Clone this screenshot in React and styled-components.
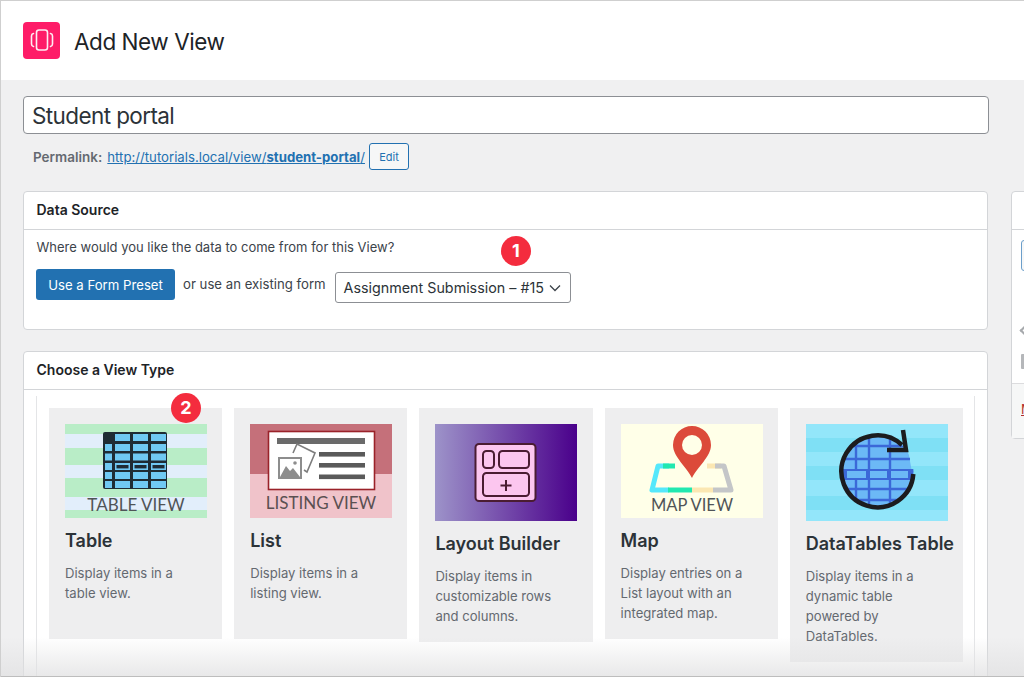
import React from "react";
import styled, { createGlobalStyle } from "styled-components";

const Global = createGlobalStyle`
  html, body { margin: 0; padding: 0; background: #f0f0f1; }
  * { box-sizing: border-box; }
  body { font-family: Inter, "Liberation Sans", sans-serif; color: #1d2327; }
`;

const Page = styled.div`
  position: relative;
  width: 1024px;
  height: 677px;
  overflow: hidden;
  background: #f0f0f1;
  border-top: 1px solid #cfcfcf;
  border-left: 1px solid #cfcfcf;
`;
const Header = styled.header`
  height: 79px;
  background: #fff;
  display: flex;
  align-items: center;
  gap: 14px;
  padding: 2px 0 0 22px;
`;
const Logo = styled.div`
  width: 37px;
  height: 37px;
  margin-top: -3px;
  border-radius: 4px;
  background: #fe1c68;
  display: flex;
  align-items: center;
  justify-content: center;
`;
const PageTitle = styled.h1`
  margin: 0;
  font-size: 22.5px;
  font-weight: 400;
  letter-spacing: -0.45px;
  color: #1d2327;
`;
const Content = styled.main`
  padding: 16px 0 0 22px;
  width: 1200px;
`;
const TitleInput = styled.div`
  width: 966px;
  height: 38px;
  background: #fff;
  border: 1px solid #8c8f94;
  border-radius: 4px;
  padding: 0 8px;
  font-size: 22.5px;
  letter-spacing: -0.6px;
  line-height: 37px;
  color: #2c3338;
`;
const PermaRow = styled.div`
  display: flex;
  align-items: center;
  height: 27px;
  margin: 9px 0 21px 10px;
  font-size: 13.5px;
  color: #646970;
`;
const PermaLabel = styled.strong`
  font-weight: 600;
  margin-right: 5px;
`;
const PermaLink = styled.a`
  color: #2271b1;
  text-decoration: underline;
  font-size: 13.2px;
`;
const EditButton = styled.button`
  margin-left: 4px;
  width: 40px;
  height: 27px;
  background: #f6f7f7;
  border: 1px solid #2271b1;
  border-radius: 3px;
  color: #2271b1;
  font: 400 11px Inter, sans-serif;
  padding: 0;
`;
const Columns = styled.div`
  display: flex;
  align-items: flex-start;
  gap: 23px;
`;
const MainCol = styled.div`
  width: 965px;
  flex: none;
  display: flex;
  flex-direction: column;
  gap: 21px;
`;
const Box = styled.section`
  position: relative;
  background: #fff;
  border: 1px solid #d3d5d8;
  border-radius: 4px;
`;
const BoxHead = styled.h2`
  margin: 0;
  height: 38px;
  padding: 0 12.5px;
  font-size: 14px;
  font-weight: 600;
  line-height: 36px;
  color: #1d2327;
  border-bottom: 1px solid #d3d5d8;
`;
const SourceBody = styled.div`
  height: 99px;
  padding: 8px 12.5px;
  font-size: 13px;
  color: #3c434a;
`;
const Question = styled.p`
  margin: 0 0 13px;
  line-height: 18px;
`;
const SourceRow = styled.div`
  display: flex;
  align-items: flex-start;
`;
const PrimaryButton = styled.button`
  width: 139px;
  height: 31px;
  margin-left: -0.5px;
  background: #2271b1;
  border: 0;
  border-radius: 3px;
  color: #fff;
  font: 400 13.2px Inter, sans-serif;
  padding: 0;
`;
const OrText = styled.span`
  margin: 0 9px 0 8px;
  font-size: 13.2px;
  line-height: 31px;
`;
const Select = styled.div`
  width: 236px;
  height: 31px;
  margin-top: 3px;
  border: 1px solid #8c8f94;
  border-radius: 3px;
  background: #fff;
  display: flex;
  align-items: center;
  justify-content: space-between;
  padding: 0 8px;
  font-size: 14.3px;
  color: #2c3338;
  white-space: nowrap;
`;
const Badge = styled.span`
  position: absolute;
  left: ${(p) => p.$x}px;
  top: ${(p) => p.$y}px;
  width: 30px;
  height: 30px;
  border-radius: 50%;
  background: #f42c3e;
  color: #fff;
  font-size: 18px;
  font-weight: 700;
  line-height: 30px;
  text-align: center;
  z-index: 2;
`;
const TypeBody = styled.div`
  height: 310px;
  padding: 6px 12px 0;
`;
const TypeInner = styled.div`
  height: 100%;
  border-left: 1px solid #e4e5e7;
  border-right: 1px solid #e4e5e7;
  padding: 12px 12px 0;
  display: grid;
  grid-template-columns: repeat(5, 173.2px);
  gap: 12px;
  align-items: start;
`;
const Card = styled.article`
  background: #eeeeef;
  min-height: 231px;
  padding: 16px 15px 16px 16px;
`;
const Thumb = styled.svg`
  display: block;
  width: 142px;
  height: ${(p) => p.$h}px;
`;
const CardTitle = styled.h3`
  margin: 11px 0 10px;
  font-size: 18px;
  line-height: 24px;
  font-weight: 600;
  color: #2c3338;
  white-space: nowrap;
`;
const CardText = styled.p`
  margin: 0;
  font-size: 13.1px;
  line-height: 20px;
  color: #646970;
`;
const SideBox = styled.aside`
  flex: none;
  width: 200px;
  height: 248px;
  background: #fff;
  border: 1px solid #d3d5d8;
  border-radius: 4px;
  display: flex;
  flex-direction: column;
`;
const SideHead = styled.div`
  height: 38px;
  border-bottom: 1px solid #d3d5d8;
`;
const SideBody = styled.div`
  flex: 1;
  padding: 10px 9px;
  display: flex;
  flex-direction: column;
`;
const SideButton = styled.div`
  width: 60px;
  height: 31px;
  border: 1px solid #6c9fcb;
  border-radius: 3px;
  background: #f6f7f7;
`;
const SideArrow = styled.div`
  width: 7px;
  height: 7px;
  margin: 56px 0 0 0;
  border-left: 2px solid #a7aaad;
  border-bottom: 2px solid #a7aaad;
  transform: rotate(45deg);
`;
const SideSquare = styled.div`
  width: 12px;
  height: 15px;
  margin-top: 20px;
  background: #b5b7ba;
  border-radius: 1px;
`;
const SideFoot = styled.div`
  height: 55px;
  padding: 17px 9px;
  background: #f6f7f7;
  border-top: 1px solid #dcdcde;
  color: #b32d2e;
  font-size: 13px;
  text-decoration: underline;
  white-space: nowrap;
`;
const BottomFade = styled.div`
  position: absolute;
  left: 0;
  right: 0;
  bottom: 0;
  height: 40px;
  background: linear-gradient(to bottom, rgba(225,225,226,0), rgba(225,225,226,.75));
  border-bottom: 1px solid #bdbdbd;
  pointer-events: none;
`;

const Label = ({ x, y, size, children, fill = "#4f5457" }) => (
  <text x={x} y={y} fontFamily="Lato, sans-serif" fontSize={size} fontWeight="400" fill={fill} textAnchor="middle">
    {children}
  </text>
);

const TableThumb = () => (
  <Thumb $h={94} viewBox="0 0 142 94">
    <rect width="142" height="94" fill="#b9edc7" />
    <rect y="10" width="142" height="14" fill="#e2eefb" />
    <rect y="41" width="142" height="13" fill="#e2eefb" />
    <rect y="73" width="142" height="13" fill="#e2eefb" />
    <rect x="38" y="8" width="64" height="57" rx="2" fill="#1f2c34" />
    {[10, 20, 29.5, 39, 48, 57].map((y, r) =>
      [40, 50, 68, 86].map((x, c) => {
        if (r === 0 && c === 0) return null;
        const w = c === 0 ? 7 : 15;
        if (r === 3 && c > 0) {
          return (
            <g key={`${r}-${c}`}>
              <rect x={x} y={y} width={w} height="7" fill="#70c9f3" />
              <rect x={x + 1.5} y={y + 2} width={w - 3} height="3.4" fill="#1f2c34" />
            </g>
          );
        }
        return <rect key={`${r}-${c}`} x={x} y={y} width={w} height="7" fill="#70c9f3" />;
      })
    )}
    <Label x="71" y="87" size="17">TABLE VIEW</Label>
  </Thumb>
);

const ListThumb = () => (
  <Thumb $h={94} viewBox="0 0 142 94">
    <rect width="142" height="50" fill="#c5707a" />
    <rect y="50" width="142" height="44" fill="#f0c3ca" />
    <rect x="18.5" y="7.5" width="106" height="58" fill="#fff" stroke="#9a2229" strokeWidth="1.6" />
    <rect x="27" y="14" width="88" height="6" fill="#6a6a6a" />
    <rect x="69" y="28" width="46" height="4.6" fill="#5a5a5a" />
    <rect x="69" y="39" width="46" height="4.6" fill="#5a5a5a" />
    <rect x="69" y="50.5" width="46" height="4.6" fill="#5a5a5a" />
    <path d="M43 29 L47 20 L65 29 L57 48 L54 46" fill="none" stroke="#7d7d7d" strokeWidth="1.6" />
    <rect x="28" y="33" width="24" height="22" fill="#8d8d8d" />
    <rect x="30" y="35" width="20" height="18" fill="#fff" />
    <path d="M30 53 L36 42 L40 47 L43 44 L50 53 Z" fill="#8d8d8d" />
    <circle cx="45" cy="39" r="1.8" fill="#8d8d8d" />
    <Label x="71" y="85" size="17" fill="#5a5052">LISTING VIEW</Label>
  </Thumb>
);

const LayoutThumb = () => (
  <Thumb $h={97} viewBox="0 0 142 97">
    <defs>
      <linearGradient id="lb" x1="0" x2="1" y1="0" y2="0">
        <stop offset="0" stopColor="#9d93c9" />
        <stop offset="1" stopColor="#4a008b" />
      </linearGradient>
    </defs>
    <rect width="142" height="97" fill="url(#lb)" />
    <rect x="40.5" y="20" width="60" height="57" rx="3.5" fill="#fcc6ef" stroke="#4a1c32" strokeWidth="2" />
    <rect x="48" y="27" width="11" height="17" rx="3.5" fill="none" stroke="#4a1c32" strokeWidth="2" />
    <rect x="64" y="27" width="30" height="17" rx="3.5" fill="none" stroke="#4a1c32" strokeWidth="2" />
    <rect x="48" y="49" width="46" height="23" rx="3.5" fill="none" stroke="#4a1c32" strokeWidth="2" />
    <path d="M71 56 V67 M65.500 61.500 H76.500" stroke="#4a1c32" strokeWidth="2" fill="none" />
  </Thumb>
);

const MapThumb = () => (
  <Thumb $h={94} viewBox="0 0 142 94">
    <rect width="142" height="94" fill="#ffffe8" />
    <g fill="none" strokeWidth="5" strokeLinejoin="round">
      <path d="M48 42 H37 L31 66 H48" stroke="#55e8fb" />
      <path d="M42 42 H54" stroke="#21e8b0" />
      <path d="M47 66 H71" stroke="#21e8b0" />
      <path d="M71 66 H92" stroke="#fbe7b2" />
      <path d="M86 42 H100" stroke="#fbe7b2" />
      <path d="M92 66 H110 L103 42 H94" stroke="#c4c6c8" />
    </g>
    <path d="M71 54 C66 43 52 33 52 21 A19 19 0 0 1 90 21 C90 33 76 43 71 54 Z" fill="#dc4a3a" />
    <circle cx="71" cy="21" r="10" fill="#ffffe8" />
    <Label x="71" y="87" size="16.5">MAP VIEW</Label>
  </Thumb>
);

const DataThumb = () => (
  <Thumb $h={97} viewBox="0 0 142 97">
    <rect width="142" height="97" fill="#93e6fa" />
    <rect y="14" width="142" height="14" fill="#7fe0f5" />
    <rect y="42" width="142" height="14" fill="#7fe0f5" />
    <rect y="72" width="142" height="14" fill="#7fe0f5" />
    <defs>
      <clipPath id="ball"><circle cx="71.500" cy="47.500" r="36" /></clipPath>
    </defs>
    <g clipPath="url(#ball)">
      <path d="M30 10 H99 L106 48 L110 86 H30 Z" fill="#6cb9f6" />
      <path d="M30 22 H98 M30 35 H104 M30 65 H110 M30 76 H110 M63 10 V85 M84 10 V85 M50 10 V85" stroke="#3b68d8" strokeWidth="2.4" fill="none" />
      <rect x="30" y="45" width="80" height="11" fill="#3b68d8" />
      <rect x="41" y="47" width="19" height="7" fill="#6cb9f6" />
      <rect x="64" y="47" width="17" height="7" fill="#6cb9f6" />
      <rect x="85" y="47" width="17" height="7" fill="#6cb9f6" />
    </g>
    <path d="M96 21 A36 36 0 1 0 107.300 50" fill="none" stroke="#1c1c1e" strokeWidth="4.500" />
    <path d="M97 6 L100 26 L81 26" fill="none" stroke="#1c1c1e" strokeWidth="4.500" />
  </Thumb>
);

const cards = [
  { title: "Table", text: ["Display items in a", "table view."], Img: TableThumb },
  { title: "List", text: ["Display items in a", "listing view."], Img: ListThumb },
  { title: "Layout Builder", text: ["Display items in", "customizable rows", "and columns."], Img: LayoutThumb },
  { title: "Map", text: ["Display entries on a", "List layout with an", "integrated map."], Img: MapThumb },
  { title: "DataTables Table", text: ["Display items in a", "dynamic table", "powered by", "DataTables."], Img: DataThumb },
];

export default function App() {
  return (
    <Page>
      <Global />
      <Header>
        <Logo>
          <svg width="24" height="24" viewBox="0 0 24 24" fill="none" stroke="#fff" strokeWidth="1.6" strokeLinejoin="round" strokeLinecap="round" opacity=".92">
            <rect x="6.500" y="2" width="11" height="20" rx="2.500" />
            <path d="M3.500 5.500 C2.200 5.800 1.500 6.800 1.500 8 V16 C1.500 17.200 2.200 18.200 3.500 18.500" />
            <path d="M20.500 5.500 C21.800 5.800 22.500 6.800 22.500 8 V16 C22.500 17.200 21.800 18.200 20.500 18.500" />
          </svg>
        </Logo>
        <PageTitle>Add New View</PageTitle>
      </Header>
      <Content>
        <TitleInput>Student portal</TitleInput>
        <PermaRow>
          <PermaLabel>Permalink:</PermaLabel>
          <PermaLink>http://tutorials.local/view/<strong>student-portal</strong>/</PermaLink>
          <EditButton>Edit</EditButton>
        </PermaRow>
        <Columns>
          <MainCol>
            <Box>
              <BoxHead>Data Source</BoxHead>
              <SourceBody>
                <Question>Where would you like the data to come from for this View?</Question>
                <SourceRow>
                  <PrimaryButton>Use a Form Preset</PrimaryButton>
                  <OrText>or use an existing form</OrText>
                  <Select>
                    Assignment Submission – #15
                    <svg width="14" height="14" viewBox="0 0 14 14" fill="none" stroke="#3c434a" strokeWidth="1.3"><path d="M2 4.500 L7 9.500 L12 4.500" /></svg>
                  </Select>
                </SourceRow>
              </SourceBody>
              <Badge $x={477} $y={44}>1</Badge>
            </Box>
            <Box>
              <BoxHead>Choose a View Type</BoxHead>
              <TypeBody>
                <TypeInner>
                  {cards.map(({ title, text, Img }) => (
                    <Card key={title}>
                      <Img />
                      <CardTitle>{title}</CardTitle>
                      <CardText>
                        {text.map((line) => (
                          <React.Fragment key={line}>{line}<br /></React.Fragment>
                        ))}
                      </CardText>
                    </Card>
                  ))}
                </TypeInner>
              </TypeBody>
              <Badge $x={147} $y={41}>2</Badge>
            </Box>
          </MainCol>
          <SideBox>
            <SideHead />
            <SideBody>
              <SideButton />
              <SideArrow />
              <SideSquare />
            </SideBody>
            <SideFoot>Move to Trash</SideFoot>
          </SideBox>
        </Columns>
      </Content>
      <BottomFade />
    </Page>
  );
}
